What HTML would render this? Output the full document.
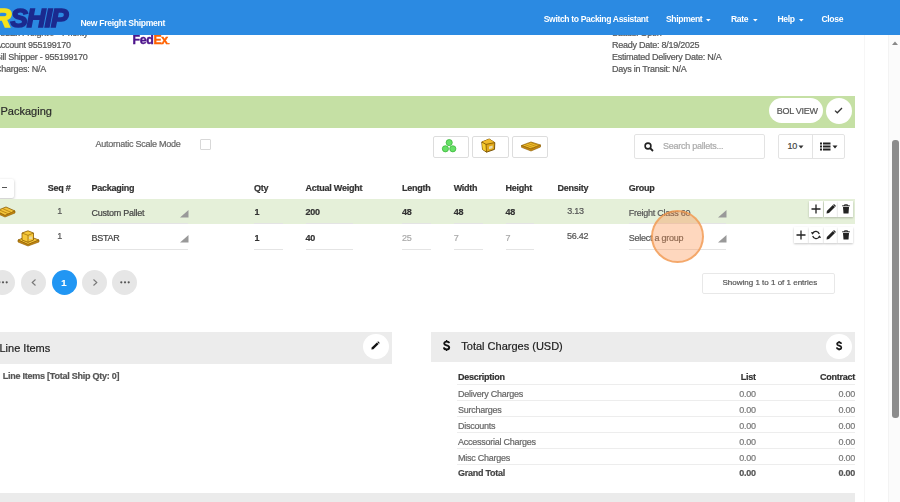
<!DOCTYPE html>
<html><head><meta charset="utf-8"><style>
html,body{margin:0;padding:0;width:900px;height:502px;overflow:hidden;background:#fff;font-family:"Liberation Sans", sans-serif;}
.t{position:absolute;white-space:nowrap;line-height:1;-webkit-text-stroke:0.2px currentColor}
svg{overflow:visible}
</style></head><body><div style="position:absolute;left:0;top:0;width:900px;height:502px;overflow:hidden;filter:blur(0.3px)">
<div style="position:absolute;left:864px;top:35px;width:1px;height:467px;background:#f6f6f6"></div>
<div style="position:absolute;left:888px;top:35px;width:12px;height:467px;background:#fbfbfb;border-left:1px solid #f3f3f3"></div>
<div style="position:absolute;left:892px;top:140px;width:6.5px;height:278px;background:#8c8c8c;border-radius:3px"></div>
<svg style="position:absolute;left:891px;top:40px" width="8" height="6" viewBox="0 0 8 6"><path d="M1 5 L4 1.5 L7 5Z" fill="#888"/></svg>
<div class="t" style="left:-5.00px;top:28.78px;font-size:9px;color:#555;font-weight:400;letter-spacing:-0.25px;">FedEx Freight® - Priority</div>
<div class="t" style="left:-5.00px;top:40.88px;font-size:9px;color:#555;font-weight:400;letter-spacing:-0.25px;">Account 955199170</div>
<div class="t" style="left:-5.00px;top:52.98px;font-size:9px;color:#555;font-weight:400;letter-spacing:-0.25px;">Bill Shipper - 955199170</div>
<div class="t" style="left:-5.00px;top:65.08px;font-size:9px;color:#555;font-weight:400;letter-spacing:-0.25px;">Charges: N/A</div>
<div class="t" style="left:612.00px;top:28.78px;font-size:9px;color:#555;font-weight:400;letter-spacing:-0.25px;">Status: Open</div>
<div class="t" style="left:612.00px;top:40.88px;font-size:9px;color:#555;font-weight:400;letter-spacing:-0.25px;">Ready Date: 8/19/2025</div>
<div class="t" style="left:612.00px;top:52.98px;font-size:9px;color:#555;font-weight:400;letter-spacing:-0.25px;">Estimated Delivery Date: N/A</div>
<div class="t" style="left:612.00px;top:65.08px;font-size:9px;color:#555;font-weight:400;letter-spacing:-0.25px;">Days in Transit: N/A</div>
<div class="t" style="left:132.5px;top:34.2px;font-size:12.3px;font-weight:700;letter-spacing:-0.3px;-webkit-text-stroke:0.45px currentColor"><span style="color:#4d148c;-webkit-text-stroke:0.45px #4d148c">Fed</span><span style="color:#ff6200;-webkit-text-stroke:0.45px #ff6200">Ex</span><span style="color:#ff6200;font-size:6px">.</span></div>
<div style="position:absolute;left:0px;top:0px;width:900px;height:34.6px;background:#2b8ae2"></div>
<div class="t" style="left:-7.5px;top:4.9px;font-size:26px;font-weight:700;font-style:italic;letter-spacing:-0.9px"><span style="color:#f6e21c;-webkit-text-stroke:1.6px #f6e21c">R</span><span style="color:#1b2a8f;-webkit-text-stroke:1.6px #1b2a8f">SHIP</span></div>
<div class="t" style="left:80.40px;top:18.52px;font-size:8.6px;color:#fff;font-weight:700;letter-spacing:-0.3px;-webkit-text-stroke:0">New Freight Shipment</div>
<div class="t" style="left:543.70px;top:14.92px;font-size:8.6px;color:#fff;font-weight:700;letter-spacing:-0.36px;-webkit-text-stroke:0">Switch to Packing Assistant</div>
<div class="t" style="left:666.00px;top:14.92px;font-size:8.6px;color:#fff;font-weight:700;letter-spacing:-0.36px;-webkit-text-stroke:0">Shipment</div>
<div class="t" style="left:731.00px;top:14.92px;font-size:8.6px;color:#fff;font-weight:700;letter-spacing:-0.36px;-webkit-text-stroke:0">Rate</div>
<div class="t" style="left:777.50px;top:14.92px;font-size:8.6px;color:#fff;font-weight:700;letter-spacing:-0.36px;-webkit-text-stroke:0">Help</div>
<div class="t" style="left:821.50px;top:14.92px;font-size:8.6px;color:#fff;font-weight:700;letter-spacing:-0.36px;-webkit-text-stroke:0">Close</div>
<svg style="position:absolute;left:706.2px;top:19.2px" width="5" height="3" viewBox="0 0 5 3"><path d="M0 0 L4.6 0 L2.3 2.4Z" fill="#fff"/></svg>
<svg style="position:absolute;left:752.6px;top:19.2px" width="5" height="3" viewBox="0 0 5 3"><path d="M0 0 L4.6 0 L2.3 2.4Z" fill="#fff"/></svg>
<svg style="position:absolute;left:799.4px;top:19.2px" width="5" height="3" viewBox="0 0 5 3"><path d="M0 0 L4.6 0 L2.3 2.4Z" fill="#fff"/></svg>
<div style="position:absolute;left:0px;top:95.6px;width:855px;height:32px;background:#c5e0a4"></div>
<div class="t" style="left:0.50px;top:106.09px;font-size:11px;color:#2a2a2a;font-weight:400;">Packaging</div>
<div style="position:absolute;left:769px;top:98px;width:54px;height:25px;background:#fff;border-radius:13px"></div>
<div class="t" style="left:776.70px;top:106.78px;font-size:9px;color:#555;font-weight:400;letter-spacing:-0.25px;">BOL VIEW</div>
<div style="position:absolute;left:825.6px;top:97.6px;width:26px;height:26px;background:#fff;border-radius:50%"></div>
<svg style="position:absolute;left:834px;top:106.8px" width="9" height="7" viewBox="0 0 9 7"><path d="M1 3.6 L3.3 5.8 L8 1" stroke="#333" stroke-width="1.3" fill="none"/></svg>
<div class="t" style="left:95.50px;top:139.98px;font-size:9px;color:#666;font-weight:400;letter-spacing:-0.25px;">Automatic Scale Mode</div>
<div style="position:absolute;left:200px;top:139px;width:11px;height:11px;box-sizing:border-box;border:1px solid #d8d8d8;border-radius:1px"></div>
<div style="position:absolute;left:433.2px;top:136px;width:36.3px;height:22px;box-sizing:border-box;border:1px solid #ddd;border-radius:2px;background:#fff"></div>
<div style="position:absolute;left:472.4px;top:136px;width:36.3px;height:22px;box-sizing:border-box;border:1px solid #ddd;border-radius:2px;background:#fff"></div>
<div style="position:absolute;left:511.7px;top:136px;width:36.3px;height:22px;box-sizing:border-box;border:1px solid #ddd;border-radius:2px;background:#fff"></div>
<svg style="position:absolute;left:438px;top:136px" width="24" height="20" viewBox="0 0 24 20"><g fill="#66e066" stroke="#2fb02f" stroke-width="0.7"><circle cx="11.2" cy="6.6" r="3.1"/><circle cx="7.4" cy="12.8" r="3.1"/><circle cx="14.8" cy="12.8" r="3.1"/></g></svg>
<svg style="position:absolute;left:480px;top:138px" width="17" height="16" viewBox="0 0 17 16"><path d="M1.8 4 L9.2 1 L14.8 4.6 L14.5 11.4 L6.5 14.2 L2.5 11.4Z" fill="#e0a818" stroke="#6e4a00" stroke-width="0.9" stroke-linejoin="round"/><path d="M1.8 4 L9.2 1 L14.8 4.6 L6 6.4Z" fill="#f0bb2a"/><path d="M2 4.2 L6 6.4 L6.5 13.8 L2.7 11.2Z" fill="#f8cf30"/><path d="M1.8 4 L6 6.4 L14.8 4.6 M6 6.4 L6.5 14.2" stroke="#7a5200" stroke-width="0.8" fill="none"/><path d="M9 8.6 L12.6 7.6 L12.6 10.2 L9 11.2Z" fill="#e8dcb0"/></svg>
<svg style="position:absolute;left:520.5px;top:140.5px" width="20" height="11" viewBox="0 0 20 11"><path d="M0.5 4.5 L10 1 L19.5 4 L10 8Z" fill="#f0bf2a" stroke="#8a5a00" stroke-width="0.7"/><path d="M0.5 4.5 L0.5 6.3 L10 10 L19.5 6 L19.5 4 L10 8Z" fill="#c98a10" stroke="#8a5a00" stroke-width="0.6"/><path d="M3.5 3.4 L13 7 M6.5 2.3 L16 5.8 M9.5 1.4 L18 4.6" stroke="#b07b10" stroke-width="0.7"/></svg>
<div style="position:absolute;left:634.4px;top:134.4px;width:131px;height:24.3px;box-sizing:border-box;border:1px solid #e3e3e3;border-radius:2px;background:#fff"></div>
<svg style="position:absolute;left:644px;top:142px" width="10" height="10" viewBox="0 0 10 10"><circle cx="4" cy="4" r="2.9" stroke="#222" stroke-width="1.6" fill="none"/><path d="M6 6 L9 9" stroke="#222" stroke-width="1.8"/></svg>
<div class="t" style="left:663.00px;top:142.18px;font-size:9px;color:#aaa;font-weight:400;letter-spacing:-0.25px;">Search pallets...</div>
<div style="position:absolute;left:778.3px;top:134.4px;width:67px;height:24.3px;box-sizing:border-box;border:1px solid #e3e3e3;border-radius:2px;background:#fff"></div>
<div style="position:absolute;left:812.3px;top:134.4px;width:1px;height:24.3px;background:#e3e3e3"></div>
<div class="t" style="left:787.50px;top:142.38px;font-size:9px;color:#444;font-weight:400;letter-spacing:-0.25px;">10</div>
<svg style="position:absolute;left:798px;top:145px" width="6" height="4" viewBox="0 0 6 4"><path d="M0.5 0.5 L5.5 0.5 L3 3.5Z" fill="#333"/></svg>
<svg style="position:absolute;left:820px;top:142px" width="11" height="9" viewBox="0 0 11 9"><g fill="#222"><rect x="0" y="0.5" width="2" height="2"/><rect x="0" y="3.5" width="2" height="2"/><rect x="0" y="6.5" width="2" height="2"/><rect x="3" y="0.5" width="7.5" height="2"/><rect x="3" y="3.5" width="7.5" height="2"/><rect x="3" y="6.5" width="7.5" height="2"/></g></svg>
<svg style="position:absolute;left:831.5px;top:145px" width="6" height="4" viewBox="0 0 6 4"><path d="M0.5 0.5 L5.5 0.5 L3 3.5Z" fill="#222"/></svg>
<div style="position:absolute;left:-3px;top:178.5px;width:17.4px;height:19.5px;background:#fff;box-shadow:0 1px 3px rgba(0,0,0,.25);border-radius:2px"></div>
<div style="position:absolute;left:1.5px;top:187px;width:5px;height:1.2px;background:#555"></div>
<div class="t" style="left:47.70px;top:183.58px;font-size:9px;color:#333;font-weight:700;letter-spacing:-0.25px;">Seq #</div>
<div class="t" style="left:91.40px;top:183.58px;font-size:9px;color:#333;font-weight:700;letter-spacing:-0.25px;">Packaging</div>
<div class="t" style="left:254.00px;top:183.58px;font-size:9px;color:#333;font-weight:700;letter-spacing:-0.25px;">Qty</div>
<div class="t" style="left:305.60px;top:183.58px;font-size:9px;color:#333;font-weight:700;letter-spacing:-0.25px;">Actual Weight</div>
<div class="t" style="left:402.10px;top:183.58px;font-size:9px;color:#333;font-weight:700;letter-spacing:-0.25px;">Length</div>
<div class="t" style="left:453.70px;top:183.58px;font-size:9px;color:#333;font-weight:700;letter-spacing:-0.25px;">Width</div>
<div class="t" style="left:505.50px;top:183.58px;font-size:9px;color:#333;font-weight:700;letter-spacing:-0.25px;">Height</div>
<div class="t" style="left:557.50px;top:183.58px;font-size:9px;color:#333;font-weight:700;letter-spacing:-0.25px;">Density</div>
<div class="t" style="left:628.80px;top:183.58px;font-size:9px;color:#333;font-weight:700;letter-spacing:-0.25px;">Group</div>
<div style="position:absolute;left:0px;top:199.3px;width:855px;height:25.2px;background:#e5f0d9"></div>
<div class="t" style="left:57.30px;top:207.08px;font-size:9px;color:#555;font-weight:400;letter-spacing:-0.25px;">1</div>
<div class="t" style="left:91.40px;top:209.08px;font-size:9px;color:#444;font-weight:400;letter-spacing:-0.25px;">Custom Pallet</div>
<div class="t" style="left:254.40px;top:208.18px;font-size:9px;color:#333;font-weight:700;letter-spacing:-0.25px;">1</div>
<div class="t" style="left:305.60px;top:208.18px;font-size:9px;color:#333;font-weight:700;letter-spacing:-0.25px;">200</div>
<div class="t" style="left:402.10px;top:208.18px;font-size:9px;color:#333;font-weight:700;letter-spacing:-0.25px;">48</div>
<div class="t" style="left:453.70px;top:208.18px;font-size:9px;color:#333;font-weight:700;letter-spacing:-0.25px;">48</div>
<div class="t" style="left:505.50px;top:208.18px;font-size:9px;color:#333;font-weight:700;letter-spacing:-0.25px;">48</div>
<div class="t" style="right:316.30px;top:206.58px;font-size:9px;color:#555;font-weight:400;letter-spacing:-0.25px;">3.13</div>
<div class="t" style="left:628.80px;top:209.08px;font-size:9px;color:#555;font-weight:400;letter-spacing:-0.25px;">Freight Class 60</div>
<div class="t" style="left:57.30px;top:232.48px;font-size:9px;color:#555;font-weight:400;letter-spacing:-0.25px;">1</div>
<div class="t" style="left:91.40px;top:234.48px;font-size:9px;color:#444;font-weight:400;letter-spacing:-0.25px;">BSTAR</div>
<div class="t" style="left:254.40px;top:233.68px;font-size:9px;color:#333;font-weight:700;letter-spacing:-0.25px;">1</div>
<div class="t" style="left:305.60px;top:233.68px;font-size:9px;color:#333;font-weight:700;letter-spacing:-0.25px;">40</div>
<div class="t" style="left:402.10px;top:233.68px;font-size:9px;color:#aaa;font-weight:400;letter-spacing:-0.25px;">25</div>
<div class="t" style="left:453.70px;top:233.68px;font-size:9px;color:#aaa;font-weight:400;letter-spacing:-0.25px;">7</div>
<div class="t" style="left:505.50px;top:233.68px;font-size:9px;color:#aaa;font-weight:400;letter-spacing:-0.25px;">7</div>
<div class="t" style="right:311.70px;top:231.88px;font-size:9px;color:#555;font-weight:400;letter-spacing:-0.25px;">56.42</div>
<div class="t" style="left:628.80px;top:234.48px;font-size:9px;color:#555;font-weight:400;letter-spacing:-0.25px;">Select a group</div>
<div style="position:absolute;left:91px;top:223.4px;width:97.19999999999999px;height:1px;background:#e4e4e4"></div>
<div style="position:absolute;left:254px;top:223.4px;width:29px;height:1px;background:#e4e4e4"></div>
<div style="position:absolute;left:305.6px;top:223.4px;width:47.099999999999966px;height:1px;background:#e4e4e4"></div>
<div style="position:absolute;left:402px;top:223.4px;width:29.30000000000001px;height:1px;background:#e4e4e4"></div>
<div style="position:absolute;left:453.7px;top:223.4px;width:28.900000000000034px;height:1px;background:#e4e4e4"></div>
<div style="position:absolute;left:505.5px;top:223.4px;width:28.700000000000045px;height:1px;background:#e4e4e4"></div>
<div style="position:absolute;left:628.5px;top:223.4px;width:97.5px;height:1px;background:#e4e4e4"></div>
<div style="position:absolute;left:91px;top:248.5px;width:97.19999999999999px;height:1px;background:#e4e4e4"></div>
<div style="position:absolute;left:254px;top:248.5px;width:29px;height:1px;background:#e4e4e4"></div>
<div style="position:absolute;left:305.6px;top:248.5px;width:47.099999999999966px;height:1px;background:#e4e4e4"></div>
<div style="position:absolute;left:402px;top:248.5px;width:29.30000000000001px;height:1px;background:#e4e4e4"></div>
<div style="position:absolute;left:453.7px;top:248.5px;width:28.900000000000034px;height:1px;background:#e4e4e4"></div>
<div style="position:absolute;left:505.5px;top:248.5px;width:28.700000000000045px;height:1px;background:#e4e4e4"></div>
<div style="position:absolute;left:628.5px;top:248.5px;width:97.5px;height:1px;background:#e4e4e4"></div>
<svg style="position:absolute;left:180px;top:209.5px" width="9" height="8" viewBox="0 0 9 8"><path d="M8.5 0 L8.5 7.5 L0 7.5Z" fill="#999"/></svg>
<svg style="position:absolute;left:717.5px;top:209.5px" width="9" height="8" viewBox="0 0 9 8"><path d="M8.5 0 L8.5 7.5 L0 7.5Z" fill="#999"/></svg>
<svg style="position:absolute;left:180px;top:234.8px" width="9" height="8" viewBox="0 0 9 8"><path d="M8.5 0 L8.5 7.5 L0 7.5Z" fill="#999"/></svg>
<svg style="position:absolute;left:717.5px;top:234.8px" width="9" height="8" viewBox="0 0 9 8"><path d="M8.5 0 L8.5 7.5 L0 7.5Z" fill="#999"/></svg>
<svg style="position:absolute;left:-4px;top:206px" width="20" height="12" viewBox="0 0 20 12"><path d="M0 5 L10 1 L19 5 L9 9.5Z" fill="#f3c43a" stroke="#8a5a00" stroke-width="0.8"/><path d="M0 5 L0 7 L9 11 L19 7 L19 5 L9 9.5Z" fill="#c98a10" stroke="#8a5a00" stroke-width="0.6"/><path d="M3 3.8 L13 8 M6.5 2.5 L16 6.8" stroke="#b07b10" stroke-width="0.8"/></svg>
<svg style="position:absolute;left:17px;top:229.5px" width="23" height="17" viewBox="0 0 23 17"><path d="M1 10 L11 6 L22 10 L11 14.5Z" fill="#f3c43a" stroke="#8a5a00" stroke-width="0.8"/><path d="M1 10 L1 12 L11 16 L22 12 L22 10 L11 14.5Z" fill="#c98a10" stroke="#8a5a00" stroke-width="0.6"/><path d="M5 3 L11 0.8 L16.5 3 L16.5 10 L11 12.3 L5 10Z" fill="#f6c83a" stroke="#8a5a00" stroke-width="0.8"/><path d="M5 3 L11 5.3 L16.5 3 M11 5.3 L11 12.3" stroke="#8a5a00" stroke-width="0.6" fill="none"/><rect x="12" y="6.5" width="3.2" height="2.6" fill="#e8d8a0"/></svg>
<div style="position:absolute;left:808.7px;top:200.7px;width:14.8px;height:16.5px;background:#fff;box-shadow:0 1px 2px rgba(0,0,0,.22)"></div>
<svg style="position:absolute;left:811.1px;top:203.95px" width="10" height="10" viewBox="0 0 10 10"><path d="M5 0.5 V9.5 M0.5 5 H9.5" stroke="#222" stroke-width="1.3"/></svg>
<div style="position:absolute;left:823.5300000000001px;top:200.7px;width:14.8px;height:16.5px;background:#fff;box-shadow:0 1px 2px rgba(0,0,0,.22)"></div>
<svg style="position:absolute;left:825.9300000000001px;top:203.95px" width="10" height="10" viewBox="0 0 10 10"><path d="M0.6 9.4 L0.9 7.0 L6.9 1.0 L9.0 3.1 L3.0 9.1Z" fill="#222"/><path d="M7.6 0.4 L9.6 2.4" stroke="#222" stroke-width="1.2"/></svg>
<div style="position:absolute;left:838.36px;top:200.7px;width:14.8px;height:16.5px;background:#fff;box-shadow:0 1px 2px rgba(0,0,0,.22)"></div>
<svg style="position:absolute;left:840.76px;top:203.95px" width="10" height="10" viewBox="0 0 10 10"><path d="M1.2 1.8 H8.8 M3.5 1.8 V0.8 H6.5 V1.8" stroke="#222" stroke-width="1" fill="none"/><path d="M2 3 H8 L7.5 9.6 H2.5Z" fill="#222"/></svg>
<div style="position:absolute;left:793.9px;top:226.5px;width:14.8px;height:16.5px;background:#fff;box-shadow:0 1px 2px rgba(0,0,0,.22)"></div>
<svg style="position:absolute;left:796.3px;top:229.75px" width="10" height="10" viewBox="0 0 10 10"><path d="M5 0.5 V9.5 M0.5 5 H9.5" stroke="#222" stroke-width="1.3"/></svg>
<div style="position:absolute;left:808.73px;top:226.5px;width:14.8px;height:16.5px;background:#fff;box-shadow:0 1px 2px rgba(0,0,0,.22)"></div>
<svg style="position:absolute;left:811.13px;top:229.75px" width="10" height="10" viewBox="0 0 10 10"><path d="M8.3 4 A3.6 3.6 0 0 0 1.7 3.2 M1.7 6 A3.6 3.6 0 0 0 8.3 6.8" stroke="#222" stroke-width="1.2" fill="none"/><path d="M0 2 L3.2 2.4 L1.2 4.8Z M10 8 L6.8 7.6 L8.8 5.2Z" fill="#222"/></svg>
<div style="position:absolute;left:823.56px;top:226.5px;width:14.8px;height:16.5px;background:#fff;box-shadow:0 1px 2px rgba(0,0,0,.22)"></div>
<svg style="position:absolute;left:825.9599999999999px;top:229.75px" width="10" height="10" viewBox="0 0 10 10"><path d="M0.6 9.4 L0.9 7.0 L6.9 1.0 L9.0 3.1 L3.0 9.1Z" fill="#222"/><path d="M7.6 0.4 L9.6 2.4" stroke="#222" stroke-width="1.2"/></svg>
<div style="position:absolute;left:838.39px;top:226.5px;width:14.8px;height:16.5px;background:#fff;box-shadow:0 1px 2px rgba(0,0,0,.22)"></div>
<svg style="position:absolute;left:840.79px;top:229.75px" width="10" height="10" viewBox="0 0 10 10"><path d="M1.2 1.8 H8.8 M3.5 1.8 V0.8 H6.5 V1.8" stroke="#222" stroke-width="1" fill="none"/><path d="M2 3 H8 L7.5 9.6 H2.5Z" fill="#222"/></svg>
<div style="position:absolute;left:651px;top:209.8px;width:53px;height:53px;box-sizing:border-box;border-radius:50%;background:rgba(252,145,75,.36);border:2.2px solid rgba(240,150,75,.72)"></div>
<div style="position:absolute;left:-9.6px;top:269.7px;width:25px;height:25px;background:#e6e6e6;border-radius:50%"></div>
<div style="position:absolute;left:20.9px;top:269.7px;width:25px;height:25px;background:#e6e6e6;border-radius:50%"></div>
<div style="position:absolute;left:51.5px;top:269.7px;width:25px;height:25px;background:#2196f3;border-radius:50%"></div>
<div style="position:absolute;left:82.0px;top:269.7px;width:25px;height:25px;background:#e6e6e6;border-radius:50%"></div>
<div style="position:absolute;left:112.4px;top:269.7px;width:25px;height:25px;background:#e6e6e6;border-radius:50%"></div>
<svg style="position:absolute;left:-2.1px;top:281px" width="10" height="3" viewBox="0 0 10 3"><g fill="#555"><circle cx="1.3" cy="1.3" r="1.1"/><circle cx="5" cy="1.3" r="1.1"/><circle cx="8.7" cy="1.3" r="1.1"/></g></svg>
<svg style="position:absolute;left:119.9px;top:281px" width="10" height="3" viewBox="0 0 10 3"><g fill="#555"><circle cx="1.3" cy="1.3" r="1.1"/><circle cx="5" cy="1.3" r="1.1"/><circle cx="8.7" cy="1.3" r="1.1"/></g></svg>
<svg style="position:absolute;left:30.5px;top:279px" width="6" height="7" viewBox="0 0 6 7"><path d="M4.5 0.5 L1.2 3.5 L4.5 6.5" stroke="#777" stroke-width="1.1" fill="none"/></svg>
<svg style="position:absolute;left:91.5px;top:279px" width="6" height="7" viewBox="0 0 6 7"><path d="M1.5 0.5 L4.8 3.5 L1.5 6.5" stroke="#777" stroke-width="1.1" fill="none"/></svg>
<div class="t" style="left:64.00px;top:277.56px;font-size:9.5px;color:#fff;font-weight:700;transform:translateX(-50%)">1</div>
<div style="position:absolute;left:702px;top:272.5px;width:133px;height:21px;box-sizing:border-box;border:1px solid #e8e8e8;border-radius:2px"></div>
<div class="t" style="left:722.50px;top:279.03px;font-size:8px;color:#555;font-weight:400;">Showing 1 to 1 of 1 entries</div>
<div style="position:absolute;left:0px;top:331.6px;width:392px;height:32.1px;background:#ececec"></div>
<div class="t" style="left:-0.50px;top:342.59px;font-size:11px;color:#222;font-weight:400;">Line Items</div>
<div style="position:absolute;left:363px;top:333.7px;width:25.7px;height:25.7px;background:#fff;border-radius:50%"></div>
<svg style="position:absolute;left:371.3px;top:341.3px" width="9" height="9" viewBox="0 0 9 9"><path d="M0.4 8.6 L0.7 6.6 L5.9 1.4 L7.6 3.1 L2.4 8.3Z" fill="#111"/><path d="M6.7 0.6 L8.4 2.3" stroke="#111" stroke-width="1.1"/></svg>
<div class="t" style="left:2.80px;top:371.58px;font-size:9px;color:#555;font-weight:700;letter-spacing:-0.25px;">Line Items [Total Ship Qty: 0]</div>
<div style="position:absolute;left:431.4px;top:331.6px;width:424px;height:30px;background:#ececec"></div>
<svg style="position:absolute;left:443.3px;top:339.5px" width="7.4" height="11" viewBox="0 0 7.4 11"><path d="M6.1 3.2 C6 2 5 1.6 3.6 1.6 C2.1 1.6 1.2 2.4 1.2 3.4 C1.2 5.8 6.2 4.8 6.2 7.4 C6.2 8.6 5.1 9.4 3.6 9.4 C2 9.4 1 8.7 0.9 7.4" stroke="#111" stroke-width="1.9" fill="none"/><path d="M3.6 0 V1.8 M3.6 9.2 V11" stroke="#111" stroke-width="1.3"/></svg>
<div class="t" style="left:461.30px;top:340.99px;font-size:11px;color:#222;font-weight:400;">Total Charges (USD)</div>
<div style="position:absolute;left:826px;top:333.7px;width:25.7px;height:25.7px;background:#fff;border-radius:50%"></div>
<svg style="position:absolute;left:835.6px;top:341.4px" width="6.4" height="9.6" viewBox="0 0 7.4 11"><path d="M6.1 3.2 C6 2 5 1.6 3.6 1.6 C2.1 1.6 1.2 2.4 1.2 3.4 C1.2 5.8 6.2 4.8 6.2 7.4 C6.2 8.6 5.1 9.4 3.6 9.4 C2 9.4 1 8.7 0.9 7.4" stroke="#1a1a1a" stroke-width="1.9" fill="none"/><path d="M3.6 0 V1.8 M3.6 9.2 V11" stroke="#1a1a1a" stroke-width="1.3"/></svg>
<div class="t" style="left:457.90px;top:372.88px;font-size:9px;color:#333;font-weight:700;letter-spacing:-0.25px;">Description</div>
<div class="t" style="right:144.20px;top:372.88px;font-size:9px;color:#333;font-weight:700;letter-spacing:-0.25px;">List</div>
<div class="t" style="right:45.10px;top:372.88px;font-size:9px;color:#333;font-weight:700;letter-spacing:-0.25px;">Contract</div>
<div class="t" style="left:457.90px;top:389.58px;font-size:9px;color:#666;font-weight:400;letter-spacing:-0.25px;">Delivery Charges</div>
<div class="t" style="right:144.20px;top:389.58px;font-size:9px;color:#777;font-weight:400;letter-spacing:-0.25px;">0.00</div>
<div class="t" style="right:45.10px;top:389.58px;font-size:9px;color:#777;font-weight:400;letter-spacing:-0.25px;">0.00</div>
<div class="t" style="left:457.90px;top:405.58px;font-size:9px;color:#666;font-weight:400;letter-spacing:-0.25px;">Surcharges</div>
<div class="t" style="right:144.20px;top:405.58px;font-size:9px;color:#777;font-weight:400;letter-spacing:-0.25px;">0.00</div>
<div class="t" style="right:45.10px;top:405.58px;font-size:9px;color:#777;font-weight:400;letter-spacing:-0.25px;">0.00</div>
<div class="t" style="left:457.90px;top:421.58px;font-size:9px;color:#666;font-weight:400;letter-spacing:-0.25px;">Discounts</div>
<div class="t" style="right:144.20px;top:421.58px;font-size:9px;color:#777;font-weight:400;letter-spacing:-0.25px;">0.00</div>
<div class="t" style="right:45.10px;top:421.58px;font-size:9px;color:#777;font-weight:400;letter-spacing:-0.25px;">0.00</div>
<div class="t" style="left:457.90px;top:437.58px;font-size:9px;color:#666;font-weight:400;letter-spacing:-0.25px;">Accessorial Charges</div>
<div class="t" style="right:144.20px;top:437.58px;font-size:9px;color:#777;font-weight:400;letter-spacing:-0.25px;">0.00</div>
<div class="t" style="right:45.10px;top:437.58px;font-size:9px;color:#777;font-weight:400;letter-spacing:-0.25px;">0.00</div>
<div class="t" style="left:457.90px;top:453.58px;font-size:9px;color:#666;font-weight:400;letter-spacing:-0.25px;">Misc Charges</div>
<div class="t" style="right:144.20px;top:453.58px;font-size:9px;color:#777;font-weight:400;letter-spacing:-0.25px;">0.00</div>
<div class="t" style="right:45.10px;top:453.58px;font-size:9px;color:#777;font-weight:400;letter-spacing:-0.25px;">0.00</div>
<div class="t" style="left:457.90px;top:469.38px;font-size:9px;color:#444;font-weight:700;letter-spacing:-0.25px;">Grand Total</div>
<div class="t" style="right:144.20px;top:469.38px;font-size:9px;color:#555;font-weight:700;letter-spacing:-0.25px;">0.00</div>
<div class="t" style="right:45.10px;top:469.38px;font-size:9px;color:#555;font-weight:700;letter-spacing:-0.25px;">0.00</div>
<div style="position:absolute;left:457px;top:384.1px;width:398px;height:1px;background:#ededed"></div>
<div style="position:absolute;left:457px;top:400.1px;width:398px;height:1px;background:#ededed"></div>
<div style="position:absolute;left:457px;top:416.1px;width:398px;height:1px;background:#ededed"></div>
<div style="position:absolute;left:457px;top:432.1px;width:398px;height:1px;background:#ededed"></div>
<div style="position:absolute;left:457px;top:448.1px;width:398px;height:1px;background:#ededed"></div>
<div style="position:absolute;left:457px;top:464.1px;width:398px;height:1px;background:#ededed"></div>
<div style="position:absolute;left:0px;top:493.3px;width:855px;height:10px;background:#ebebeb"></div>
</div></body></html>
